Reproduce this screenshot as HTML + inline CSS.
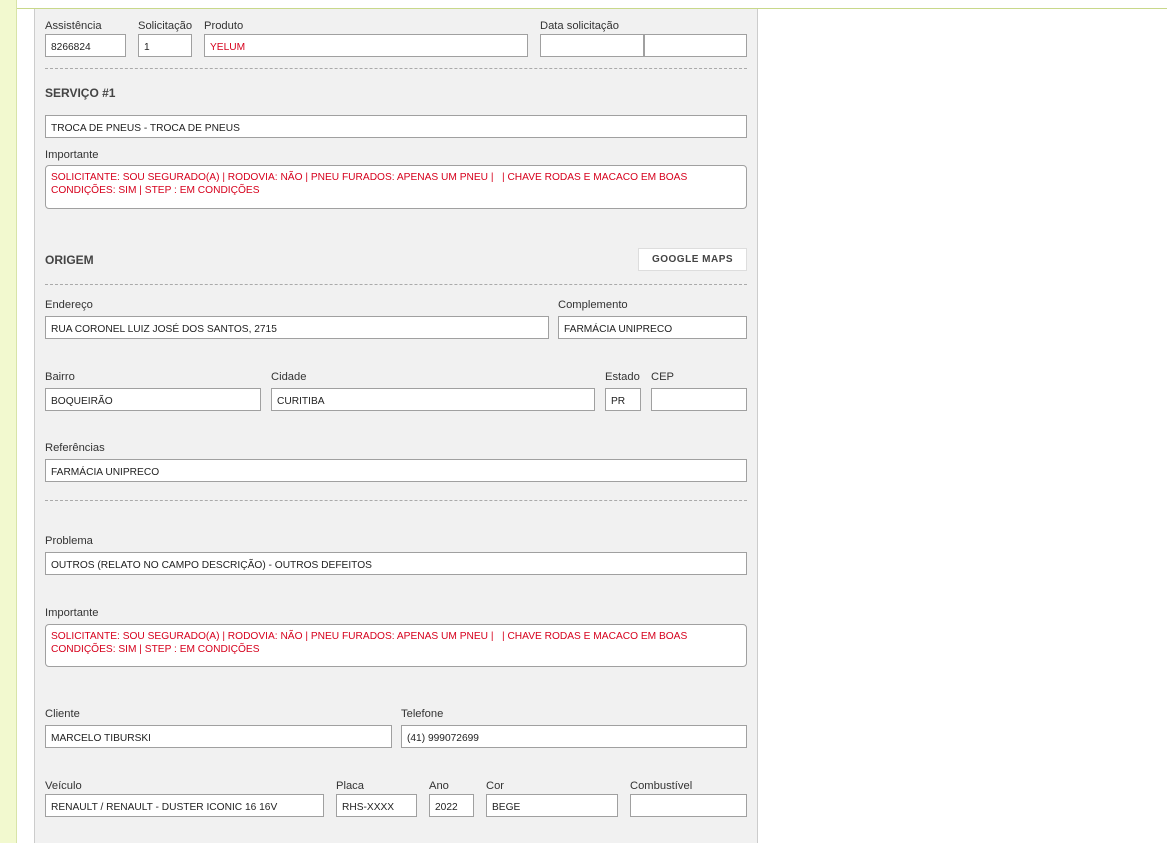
<!DOCTYPE html>
<html><head><meta charset="utf-8"><style>
body{margin:0;width:1167px;height:843px;position:relative;overflow:hidden;background:#fff;font-family:"Liberation Sans",Arial,sans-serif;color:#333}
.strip{position:absolute;left:0;top:0;width:16px;height:843px;background:#f2f9cf;border-right:1px solid #d8e4a8}
.topl{position:absolute;left:17px;top:8px;width:1150px;height:1px;background:#c8d88a}
.panel{position:absolute;left:34px;top:9px;width:722px;height:834px;background:#f1f1f1;border-left:1px solid #ccc;border-right:1px solid #ccc}
.l{position:absolute;font-size:11.2px;color:#333;line-height:14px;margin-top:1px}
.b{position:absolute;font-size:12px;font-weight:bold;color:#444;line-height:14px;margin-top:1px}
.i{position:absolute;box-sizing:border-box;height:23px;background:#fff;border:1px solid #a0a0a0;font-size:10.2px;line-height:21px;padding-top:2px;padding-left:5px;color:#222;white-space:nowrap;overflow:hidden}
.r{color:#d6001c}
.t{position:absolute;box-sizing:border-box;background:#fff;border:1px solid #a0a0a0;border-radius:4px;font-size:10.2px;line-height:13px;padding:5px 5px 4px;color:#d6001c}
.d{position:absolute;left:45px;width:702px;border-top:1px dashed #aaa;height:0}
.btn{position:absolute;left:638px;top:248px;width:109px;height:23px;box-sizing:border-box;background:#fff;border:1px solid #ddd;font-size:10px;font-weight:bold;color:#444;text-align:center;line-height:22px;letter-spacing:.5px}
</style></head><body>
<div class="strip"></div><div class="topl"></div><div class="panel"></div>
<div class="l" style="left:45px;top:18px">Assistência</div>
<div class="l" style="left:138px;top:18px">Solicitação</div>
<div class="l" style="left:204px;top:18px">Produto</div>
<div class="l" style="left:540px;top:18px">Data solicitação</div>
<div class="i" style="left:45px;top:34px;width:81px">8266824</div>
<div class="i" style="left:138px;top:34px;width:54px">1</div>
<div class="i r" style="left:204px;top:34px;width:324px">YELUM</div>
<div class="i" style="left:540px;top:34px;width:104px"></div>
<div class="i" style="left:644px;top:34px;width:103px"></div>
<div class="d" style="top:68px"></div>
<div class="b" style="left:45px;top:85px">SERVIÇO #1</div>
<div class="i" style="left:45px;top:115px;width:702px">TROCA DE PNEUS - TROCA DE PNEUS</div>
<div class="l" style="left:45px;top:147px">Importante</div>
<div class="t" style="left:45px;top:165px;width:702px;height:44px">SOLICITANTE: SOU SEGURADO(A) | RODOVIA: NÃO | PNEU FURADOS: APENAS UM PNEU | &nbsp; | CHAVE RODAS E MACACO EM BOAS CONDIÇÕES: SIM | STEP : EM CONDIÇÕES</div>
<div class="b" style="left:45px;top:252px">ORIGEM</div>
<div class="btn">GOOGLE MAPS</div>
<div class="d" style="top:284px"></div>
<div class="l" style="left:45px;top:297px">Endereço</div>
<div class="l" style="left:558px;top:297px">Complemento</div>
<div class="i" style="left:45px;top:316px;width:504px">RUA CORONEL LUIZ JOSÉ DOS SANTOS, 2715</div>
<div class="i" style="left:558px;top:316px;width:189px">FARMÁCIA UNIPRECO</div>
<div class="l" style="left:45px;top:369px">Bairro</div>
<div class="l" style="left:271px;top:369px">Cidade</div>
<div class="l" style="left:605px;top:369px">Estado</div>
<div class="l" style="left:651px;top:369px">CEP</div>
<div class="i" style="left:45px;top:388px;width:216px">BOQUEIRÃO</div>
<div class="i" style="left:271px;top:388px;width:324px">CURITIBA</div>
<div class="i" style="left:605px;top:388px;width:36px">PR</div>
<div class="i" style="left:651px;top:388px;width:96px"></div>
<div class="l" style="left:45px;top:440px">Referências</div>
<div class="i" style="left:45px;top:459px;width:702px">FARMÁCIA UNIPRECO</div>
<div class="d" style="top:500px"></div>
<div class="l" style="left:45px;top:533px">Problema</div>
<div class="i" style="left:45px;top:552px;width:702px">OUTROS (RELATO NO CAMPO DESCRIÇÃO) - OUTROS DEFEITOS</div>
<div class="l" style="left:45px;top:605px">Importante</div>
<div class="t" style="left:45px;top:624px;width:702px;height:43px">SOLICITANTE: SOU SEGURADO(A) | RODOVIA: NÃO | PNEU FURADOS: APENAS UM PNEU | &nbsp; | CHAVE RODAS E MACACO EM BOAS CONDIÇÕES: SIM | STEP : EM CONDIÇÕES</div>
<div class="l" style="left:45px;top:706px">Cliente</div>
<div class="l" style="left:401px;top:706px">Telefone</div>
<div class="i" style="left:45px;top:725px;width:347px">MARCELO TIBURSKI</div>
<div class="i" style="left:401px;top:725px;width:346px">(41) 999072699</div>
<div class="l" style="left:45px;top:778px">Veículo</div>
<div class="l" style="left:336px;top:778px">Placa</div>
<div class="l" style="left:429px;top:778px">Ano</div>
<div class="l" style="left:486px;top:778px">Cor</div>
<div class="l" style="left:630px;top:778px">Combustível</div>
<div class="i" style="left:45px;top:794px;width:279px">RENAULT / RENAULT - DUSTER ICONIC 16 16V</div>
<div class="i" style="left:336px;top:794px;width:81px">RHS-XXXX</div>
<div class="i" style="left:429px;top:794px;width:45px">2022</div>
<div class="i" style="left:486px;top:794px;width:132px">BEGE</div>
<div class="i" style="left:630px;top:794px;width:117px"></div>
</body></html>
